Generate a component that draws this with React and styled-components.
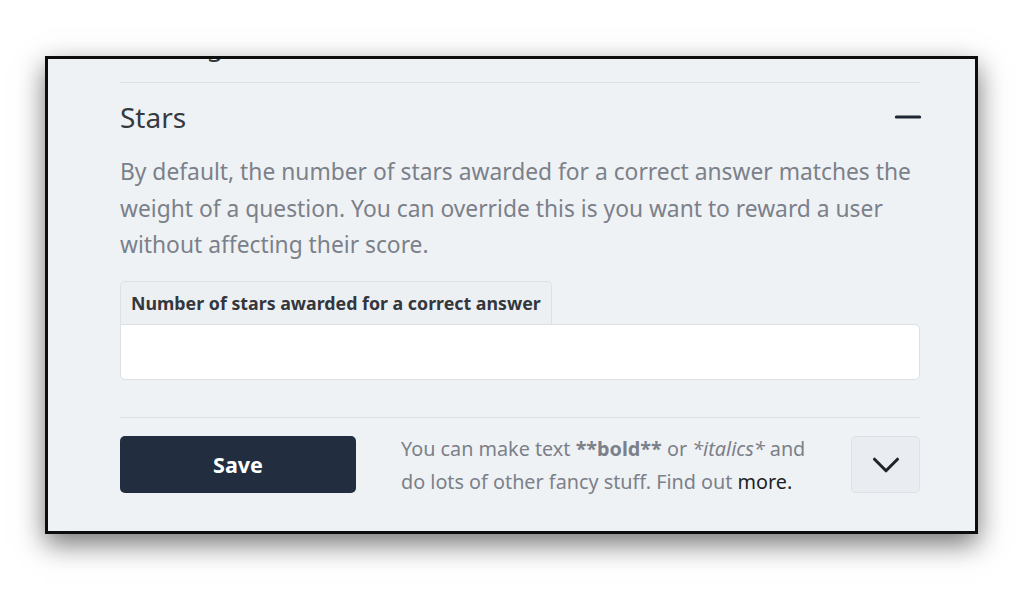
import React from 'react';
import styled, { createGlobalStyle } from 'styled-components';
import { Minus, ChevronDown } from 'lucide-react';

const GlobalStyle = createGlobalStyle`
    html, body {
        margin: 0;
        padding: 0;
        background: #ffffff;
        font-family: "Noto Sans", "Open Sans", sans-serif;
    }
`;

// 흰 배경 위에 패널을 놓는 바깥 영역
const Page = styled.div`
    padding: 56px 46px 0 45px;
    height: 589px;
    box-sizing: border-box;
`;

// 검은 테두리와 그림자가 있는 패널
const Panel = styled.div`
    width: 933px;
    height: 478px;
    box-sizing: border-box;
    border: 3px solid #0d0d0d;
    background: #eff2f5;
    box-shadow: 0 10px 26px rgba(0, 0, 0, 0.55);
    overflow: hidden;
`;

const Content = styled.div`
    padding: 0 55px 0 72px;
    margin-top: -35px;
`;

// 위쪽으로 잘려 보이는 이전 섹션
const PrevHeading = styled.div`
    font-size: 28px;
    line-height: 40px;
    color: #353a40;
    padding-bottom: 18px;
    letter-spacing: -0.6px;
`;

const Section = styled.section`
    border-top: 1px solid #dcdfe3;
    padding-top: 14px;
`;

const HeaderRow = styled.div`
    display: flex;
    align-items: center;
    justify-content: space-between;
    height: 40px;
`;

const Title = styled.h2`
    margin: 0;
    font-size: 28px;
    font-weight: 400;
    color: #353a40;
`;

const Description = styled.p`
    margin: 17px 0 17px;
    font-size: 22.8px;
    line-height: 36.5px;
    color: #7b8089;
`;

const Tab = styled.label`
    display: inline-flex;
    align-items: center;
    height: 43px;
    box-sizing: border-box;
    padding: 0 10px;
    border: 1px solid #dde1e6;
    border-bottom: none;
    border-radius: 5px 5px 0 0;
    background: #edf0f3;
    font-size: 17.8px;
    font-weight: 700;
    color: #33373d;
`;

const Input = styled.input`
    display: block;
    width: 100%;
    height: 56px;
    box-sizing: border-box;
    border: 1px solid #dde1e6;
    border-radius: 0 5px 5px 5px;
    background: #ffffff;
    outline: none;
`;

const Footer = styled.div`
    margin-top: 37px;
    border-top: 1px solid #dcdfe3;
    padding-top: 14px;
    display: flex;
    align-items: center;
`;

const SaveButton = styled.button`
    width: 236px;
    height: 57px;
    border: none;
    border-radius: 5px;
    background: #222e3f;
    color: #ffffff;
    font-family: inherit;
    font-size: 21.5px;
    font-weight: 700;
`;

const Help = styled.div`
    margin-left: 45px;
    flex: 1;
    font-size: 19.8px;
    line-height: 33px;
    color: #7b8089;

    b {
        font-weight: 700;
    }

    a {
        color: #1c1f24;
        text-decoration: none;
    }
`;

const MoreButton = styled.button`
    width: 69px;
    height: 57px;
    padding: 0;
    display: flex;
    align-items: center;
    justify-content: center;
    border: 1px solid #dde1e6;
    border-radius: 5px;
    background: #e9ecf0;
    color: #1f242b;
`;

const App = () => {
    return (
        <>
            <GlobalStyle />
            <Page>
                <Panel>
                    <Content>
                        <PrevHeading>Ranking</PrevHeading>
                        <Section>
                            <HeaderRow>
                                <Title>Stars</Title>
                                <Minus size={40} strokeWidth={1.8} color="#1e2633" style={{ marginRight: -8 }} />
                            </HeaderRow>
                            <Description>
                                By default, the number of stars awarded for a correct answer matches the
                                weight of a question. You can override this is you want to reward a user
                                without affecting their score.
                            </Description>
                            <Tab htmlFor="stars">Number of stars awarded for a correct answer</Tab>
                            <Input id="stars" type="text" />
                        </Section>
                        <Footer>
                            <SaveButton>Save</SaveButton>
                            <Help>
                                You can make text <b>**bold**</b> or <i>*italics*</i> and
                                <br />
                                do lots of other fancy stuff. Find out <a href="#more">more.</a>
                            </Help>
                            <MoreButton>
                                <ChevronDown size={46} strokeWidth={1.6} />
                            </MoreButton>
                        </Footer>
                    </Content>
                </Panel>
            </Page>
        </>
    );
};

export default App;
